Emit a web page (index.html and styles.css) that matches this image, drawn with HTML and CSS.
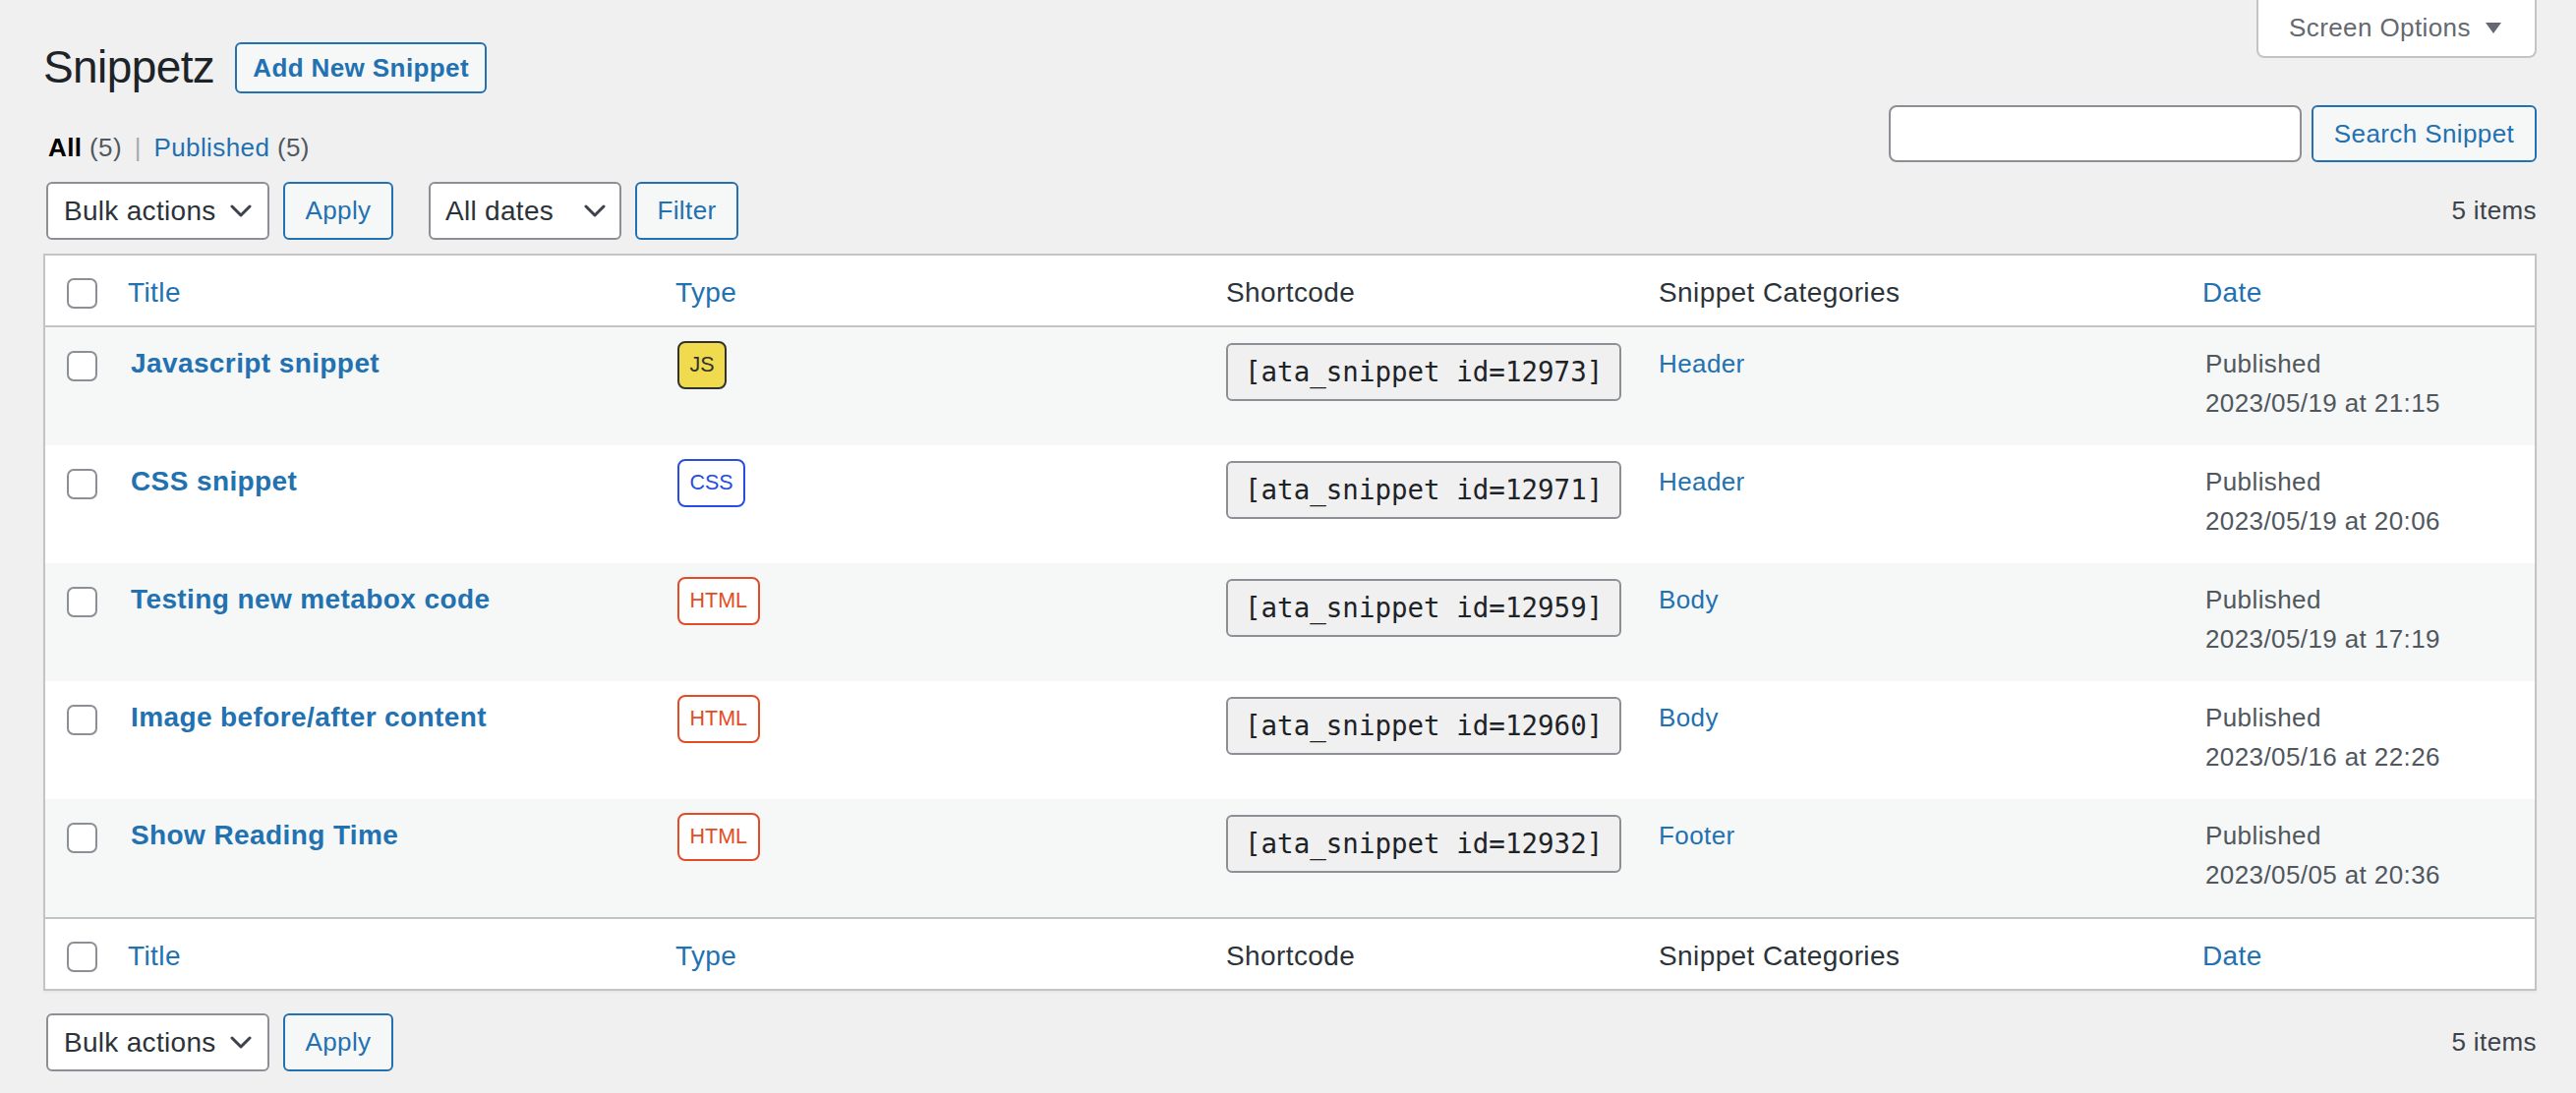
FILE: index.html
```html
<!DOCTYPE html>
<html lang="en">
<head>
<meta charset="utf-8">
<title>Snippetz</title>
<link rel="stylesheet" href="styles.css">
</head>
<body>
<div class="page">
  <div class="top">
    <div class="top-left">
      <div class="heading">
        <h1>Snippetz</h1>
        <a class="btn title-action" href="#">Add New Snippet</a>
      </div>
      <ul class="subsubsub">
        <li><a class="current" href="#">All <span class="count">(5)</span></a> <span class="sep">|</span> </li>
        <li><a href="#">Published <span class="count">(5)</span></a></li>
      </ul>
    </div>
    <div class="top-right">
      <button class="screen-options" type="button">Screen Options
        <svg class="so-arrow" viewBox="0 0 16 11" width="16" height="11"><polygon points="0,0 16,0 8,11"/></svg>
      </button>
      <div class="search-box">
        <input class="search-input" type="search" aria-label="Search Snippet">
        <button class="btn search-btn" type="button">Search Snippet</button>
      </div>
    </div>
  </div>

  <div class="tablenav">
    <div class="actions">
      <div class="select select-bulk"><span>Bulk actions</span><svg class="chev" viewBox="0 0 22 13" width="22" height="13"><path d="M2 2l9 9 9-9"/></svg></div>
      <button class="btn apply-btn" type="button">Apply</button>
    </div>
    <div class="actions filters">
      <div class="select select-dates"><span>All dates</span><svg class="chev" viewBox="0 0 22 13" width="22" height="13"><path d="M2 2l9 9 9-9"/></svg></div>
      <button class="btn filter-btn" type="button">Filter</button>
    </div>
    <div class="displaying-num">5 items</div>
  </div>

  <table class="list">
    <colgroup>
      <col class="c-cb"><col class="c-title"><col class="c-type"><col class="c-short"><col class="c-cat"><col class="c-date">
    </colgroup>
    <thead>
      <tr>
        <th class="check-column"><input class="cb" type="checkbox" aria-label="Select all"></th>
        <th class="sortable"><a href="#">Title</a></th>
        <th class="sortable"><a href="#">Type</a></th>
        <th>Shortcode</th>
        <th>Snippet Categories</th>
        <th class="sortable"><a href="#">Date</a></th>
      </tr>
    </thead>
    <tbody>
      <tr>
        <td class="check-column"><input class="cb" type="checkbox" aria-label="Select"></td>
        <td><a class="row-title" href="#">Javascript snippet</a></td>
        <td class="type"><span class="badge badge-js">JS</span></td>
        <td><code class="shortcode">[ata_snippet id=12973]</code></td>
        <td><a class="cat" href="#">Header</a></td>
        <td class="date">Published<br>2023/05/19 at 21:15</td>
      </tr>
      <tr>
        <td class="check-column"><input class="cb" type="checkbox" aria-label="Select"></td>
        <td><a class="row-title" href="#">CSS snippet</a></td>
        <td class="type"><span class="badge badge-css">CSS</span></td>
        <td><code class="shortcode">[ata_snippet id=12971]</code></td>
        <td><a class="cat" href="#">Header</a></td>
        <td class="date">Published<br>2023/05/19 at 20:06</td>
      </tr>
      <tr>
        <td class="check-column"><input class="cb" type="checkbox" aria-label="Select"></td>
        <td><a class="row-title" href="#">Testing new metabox code</a></td>
        <td class="type"><span class="badge badge-html">HTML</span></td>
        <td><code class="shortcode">[ata_snippet id=12959]</code></td>
        <td><a class="cat" href="#">Body</a></td>
        <td class="date">Published<br>2023/05/19 at 17:19</td>
      </tr>
      <tr>
        <td class="check-column"><input class="cb" type="checkbox" aria-label="Select"></td>
        <td><a class="row-title" href="#">Image before/after content</a></td>
        <td class="type"><span class="badge badge-html">HTML</span></td>
        <td><code class="shortcode">[ata_snippet id=12960]</code></td>
        <td><a class="cat" href="#">Body</a></td>
        <td class="date">Published<br>2023/05/16 at 22:26</td>
      </tr>
      <tr>
        <td class="check-column"><input class="cb" type="checkbox" aria-label="Select"></td>
        <td><a class="row-title" href="#">Show Reading Time</a></td>
        <td class="type"><span class="badge badge-html">HTML</span></td>
        <td><code class="shortcode">[ata_snippet id=12932]</code></td>
        <td><a class="cat" href="#">Footer</a></td>
        <td class="date">Published<br>2023/05/05 at 20:36</td>
      </tr>
    </tbody>
    <tfoot>
      <tr>
        <th class="check-column"><input class="cb" type="checkbox" aria-label="Select all"></th>
        <th class="sortable"><a href="#">Title</a></th>
        <th class="sortable"><a href="#">Type</a></th>
        <th>Shortcode</th>
        <th>Snippet Categories</th>
        <th class="sortable"><a href="#">Date</a></th>
      </tr>
    </tfoot>
  </table>

  <div class="tablenav bottom">
    <div class="actions">
      <div class="select select-bulk"><span>Bulk actions</span><svg class="chev" viewBox="0 0 22 13" width="22" height="13"><path d="M2 2l9 9 9-9"/></svg></div>
      <button class="btn apply-btn" type="button">Apply</button>
    </div>
    <div class="displaying-num">5 items</div>
  </div>
</div>
</body>
</html>
```

FILE: styles.css
```css
* { box-sizing: border-box; }

body {
  margin: 0;
  background: #f0f0f1;
  font-family: "Liberation Sans", Arial, sans-serif;
  font-size: 26px;
  color: #3c434a;
  letter-spacing: 0.4px;
}

.page {
  padding: 0 40px 0 44px;
}

/* ---------- top area ---------- */
.top {
  display: flex;
  justify-content: space-between;
  align-items: flex-start;
}

.top-left {
  padding-top: 20px;
}

.heading {
  display: flex;
  align-items: flex-start;
}

h1 {
  margin: 0;
  padding: 18px 0 8px;
  font-size: 46px;
  line-height: 60px;
  font-weight: 400;
  color: #1d2327;
  letter-spacing: -0.6px;
}

.btn {
  display: inline-flex;
  align-items: center;
  justify-content: center;
  height: 59px;
  padding: 0 20px;
  border: 2px solid #2271b1;
  border-radius: 6px;
  background: #f6f7f7;
  color: #2271b1;
  font-family: inherit;
  font-size: 26px;
  letter-spacing: 0.4px;
  text-decoration: none;
  white-space: nowrap;
}

.title-action {
  height: 52px;
  margin: 23px 0 0 21px;
  padding: 0 16px;
  font-weight: 700;
}

.subsubsub {
  margin: 24px 0 0;
  padding: 0;
  list-style: none;
  font-size: 26px;
  line-height: 40px;
  color: #646970;
}

.subsubsub li {
  display: inline;
}

.subsubsub a {
  padding: 0 5px;
  color: #2271b1;
  text-decoration: none;
}

.subsubsub a.current {
  color: #000;
  font-weight: 700;
}

.subsubsub .count {
  color: #50575e;
  font-weight: 400;
}

.subsubsub .sep {
  color: #a7aaad;
}

.top-right {
  display: flex;
  flex-direction: column;
  align-items: flex-end;
}

.screen-options {
  display: flex;
  align-items: center;
  gap: 15px;
  width: 285px;
  height: 59px;
  padding: 0 0 0 31px;
  background: #fff;
  border: 2px solid #c3c4c7;
  border-top: none;
  border-radius: 0 0 8px 8px;
  color: #646970;
  font-family: inherit;
  font-size: 26px;
  letter-spacing: 0.4px;
}

.so-arrow {
  fill: #646970;
}

.search-box {
  display: flex;
  gap: 10px;
  margin-top: 48px;
}

.search-input {
  width: 420px;
  height: 58px;
  margin: 0;
  border: 2px solid #8c8f94;
  border-radius: 8px;
  background: #fff;
}

.search-btn {
  width: 229px;
  height: 58px;
  padding: 0;
}

/* ---------- tablenav ---------- */
.tablenav {
  display: flex;
  align-items: center;
  height: 59px;
  margin-top: 15px;
  padding-left: 3px;
}

.tablenav.bottom {
  margin-top: 23px;
}

.actions {
  display: flex;
  gap: 14px;
}

.filters {
  margin-left: 36px;
}

.select {
  display: flex;
  align-items: center;
  justify-content: space-between;
  height: 59px;
  padding: 0 16px 0 16px;
  background: #fff;
  border: 2px solid #8c8f94;
  border-radius: 6px;
  color: #2c3338;
  font-size: 28px;
  letter-spacing: 0.3px;
}

.select-bulk { width: 227px; }
.select-dates { width: 196px; padding-left: 15px; padding-right: 14px; }

.chev {
  fill: none;
  stroke: #3c434a;
  stroke-width: 3;
  stroke-linecap: round;
  stroke-linejoin: round;
}

.apply-btn { width: 112px; padding: 0; }
.filter-btn { width: 105px; padding: 0; }

.displaying-num {
  margin-left: auto;
  color: #3c434a;
}

/* ---------- table ---------- */
table.list {
  width: 100%;
  margin-top: 14px;
  border-collapse: separate;
  border-spacing: 0;
  table-layout: fixed;
  background: #fff;
  border: 2px solid #c3c4c7;
  box-shadow: 0 2px 2px rgba(0, 0, 0, 0.04);
}

.c-cb { width: 67px; }
.c-title { width: 557px; }
.c-type { width: 557px; }
.c-short { width: 440px; }
.c-cat { width: 556px; }

thead tr, tfoot tr { height: 73px; }

thead th, tfoot th {
  padding: 18px 20px 0;
  vertical-align: top;
  text-align: left;
  font-weight: 400;
  font-size: 28px;
  line-height: 40px;
  color: #2c3338;
}

thead th { border-bottom: 2px solid #c3c4c7; }
tfoot th { border-top: 2px solid #c3c4c7; }

th.sortable { padding-left: 17px; }

th a {
  color: #2271b1;
  text-decoration: none;
}

thead th.check-column, tfoot th.check-column {
  padding: 23px 0 0 22px;
}

.cb {
  display: block;
  appearance: none;
  -webkit-appearance: none;
  width: 31px;
  height: 31px;
  margin: 0;
  background: #fff;
  border: 2px solid #8c8f94;
  border-radius: 7px;
}

tbody tr { height: 120px; }
tbody tr:nth-child(odd) { background: #f6f7f7; }

tbody td {
  padding: 17px 20px 0;
  vertical-align: top;
  font-size: 26px;
  line-height: 40px;
  color: #50575e;
}

tbody td.check-column {
  padding: 24px 0 0 22px;
}

tbody td.type { padding-left: 19px; padding-top: 14px; }
tbody td.short { padding-top: 16px; }

.row-title {
  font-size: 28px;
  font-weight: 700;
  color: #2271b1;
  text-decoration: none;
}

.badge {
  display: inline-block;
  height: 49px;
  padding: 0 10.5px;
  border: 2px solid;
  border-radius: 8px;
  font-size: 21.5px;
  line-height: 45px;
  letter-spacing: 0;
  vertical-align: top;
}

.badge-js { background: #f0db4f; border-color: #323330; color: #323330; }
.badge-css { background: #fff; border-color: #264de4; color: #264de4; }
.badge-html { background: #fff; border-color: #e34c26; color: #e34c26; }

.shortcode {
  display: inline-block;
  height: 59px;
  margin-top: -1px;
  padding: 0 17px;
  border: 2px solid #8c8f94;
  border-radius: 6px;
  background: #f0f0f1;
  font-family: "DejaVu Sans Mono", "Liberation Mono", monospace;
  font-size: 27.5px;
  line-height: 55px;
  letter-spacing: 0;
  color: #1d2327;
  white-space: nowrap;
  vertical-align: top;
}

.cat {
  color: #2271b1;
  text-decoration: none;
}

.date { color: #50575e; }
```
